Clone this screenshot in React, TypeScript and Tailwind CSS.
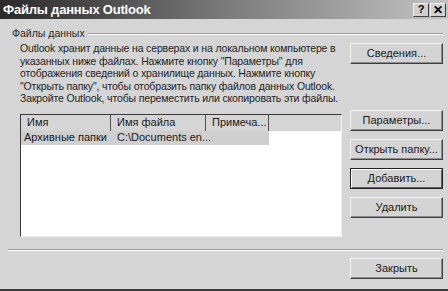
import React from "react";

const font = { fontFamily: '"Liberation Sans", Arial, sans-serif' };

function Btn({ label, def = false, className = "" }: { label: string; def?: boolean; className?: string }) {
  return (
    <div
      className={
        "w-[93px] h-[21px] flex items-center justify-center whitespace-nowrap text-[11px] text-[#1a1a1a] bg-[#d4d4d4] " +
        (def
          ? "border border-[#202020] shadow-[inset_1px_1px_0_#ffffff,inset_-1px_-1px_0_#606060]"
          : "border-t border-l border-t-[#f4f4f4] border-l-[#f4f4f4] border-b border-r border-b-[#404040] border-r-[#404040] shadow-[inset_-1px_-1px_0_#8a8a8a]") +
        " " +
        className
      }
    >
      {label}
    </div>
  );
}

export default function App() {
  return (
    <div style={font} className="w-[448px] h-[291px] bg-[#d5d5d5] flex flex-col overflow-hidden border-b-2 border-b-[#3a3a3a]">
      {/* Title bar */}
      <div className="h-[19px] shrink-0 flex items-center justify-between pl-[3px] pr-[2px] bg-gradient-to-r from-[#2a2a2a] via-[#7a7a7a] to-[#c4c4c4]">
        <span className="text-white font-bold text-[13px] tracking-[-0.2px]">Файлы данных Outlook</span>
        <div className="flex">
          <div className="w-[16px] h-[14px] bg-[#d0d0d0] border-t border-l border-[#f0f0f0] border-b border-r border-b-[#404040] border-r-[#404040] flex items-center justify-center text-[11px] font-bold text-black leading-none">?</div>
          <div className="w-[16px] h-[14px] ml-[1px] bg-[#d0d0d0] border-t border-l border-[#f0f0f0] border-b border-r border-b-[#404040] border-r-[#404040] flex items-center justify-center text-[12px] font-bold text-black leading-none">✕</div>
        </div>
      </div>

      {/* Group box */}
      <div className="mt-[9px] ml-[8px] mr-[5px] flex flex-col">
        <div className="flex items-center h-[12px]">
          <span className="ml-[4px] pr-[3px] text-[10.5px] text-[#2a2a2a]">Файлы данных</span>
          <div className="flex-1 h-[2px] border-t border-t-[#9a9a9a] border-b border-b-[#ffffff]" />
        </div>
        <div className="flex pl-[12px]">
          <div className="w-[322px] flex flex-col">
            <p className="text-[10.5px] leading-[12.5px] text-[#1e1e1e] mt-[2px] tracking-[-0.15px]">
              Outlook хранит данные на серверах и на локальном компьютере в указанных ниже файлах. Нажмите кнопку "Параметры" для отображения сведений о хранилище данных. Нажмите кнопку "Открыть папку", чтобы отобразить папку файлов данных Outlook. Закройте Outlook, чтобы переместить или скопировать эти файлы.
            </p>
            <div className="mt-[9px] h-[123px] bg-white border-t border-l border-t-[#3a3a3a] border-l-[#3a3a3a] border-r border-b border-r-[#f0f0f0] border-b-[#f0f0f0] flex flex-col">
              <div className="flex h-[16px] text-[11px] text-[#1a1a1a] whitespace-nowrap">
                <div className="w-[90px] px-[6px] flex items-center bg-[#d5d5d5] border-r border-r-[#505050]">Имя</div>
                <div className="w-[95px] px-[6px] flex items-center bg-[#d5d5d5] border-r border-r-[#505050]">Имя файла</div>
                <div className="w-[63px] px-[6px] flex items-center bg-[#d5d5d5] border-r border-r-[#505050]">Примеча...</div>
                <div className="flex-1 bg-[#d5d5d5]" />
              </div>
              <div className="flex h-[14px] w-[248px] bg-[#cfcfcf] text-[11px] text-[#1a1a1a] whitespace-nowrap">
                <div className="w-[90px] shrink-0 pl-[3px] flex items-center">Архивные папки</div>
                <div className="w-[95px] shrink-0 pl-[6px] flex items-center">C:\Documents en...</div>
              </div>
            </div>
          </div>
          <div className="ml-[8px] flex flex-col pt-[3px]">
            <Btn label="Сведения..." />
            <Btn label="Параметры..." className="mt-[46px]" />
            <Btn label="Открыть папку..." className="mt-[8px]" />
            <Btn label="Добавить..." def className="mt-[8px]" />
            <Btn label="Удалить" className="mt-[8px]" />
          </div>
        </div>
        <div className="mt-[12px] h-[2px] border-t border-t-[#9a9a9a] border-b border-b-[#ffffff]" />
      </div>

      <div className="flex justify-end mr-[5px] mt-[7px]">
        <Btn label="Закрыть" />
      </div>
    </div>
  );
}
